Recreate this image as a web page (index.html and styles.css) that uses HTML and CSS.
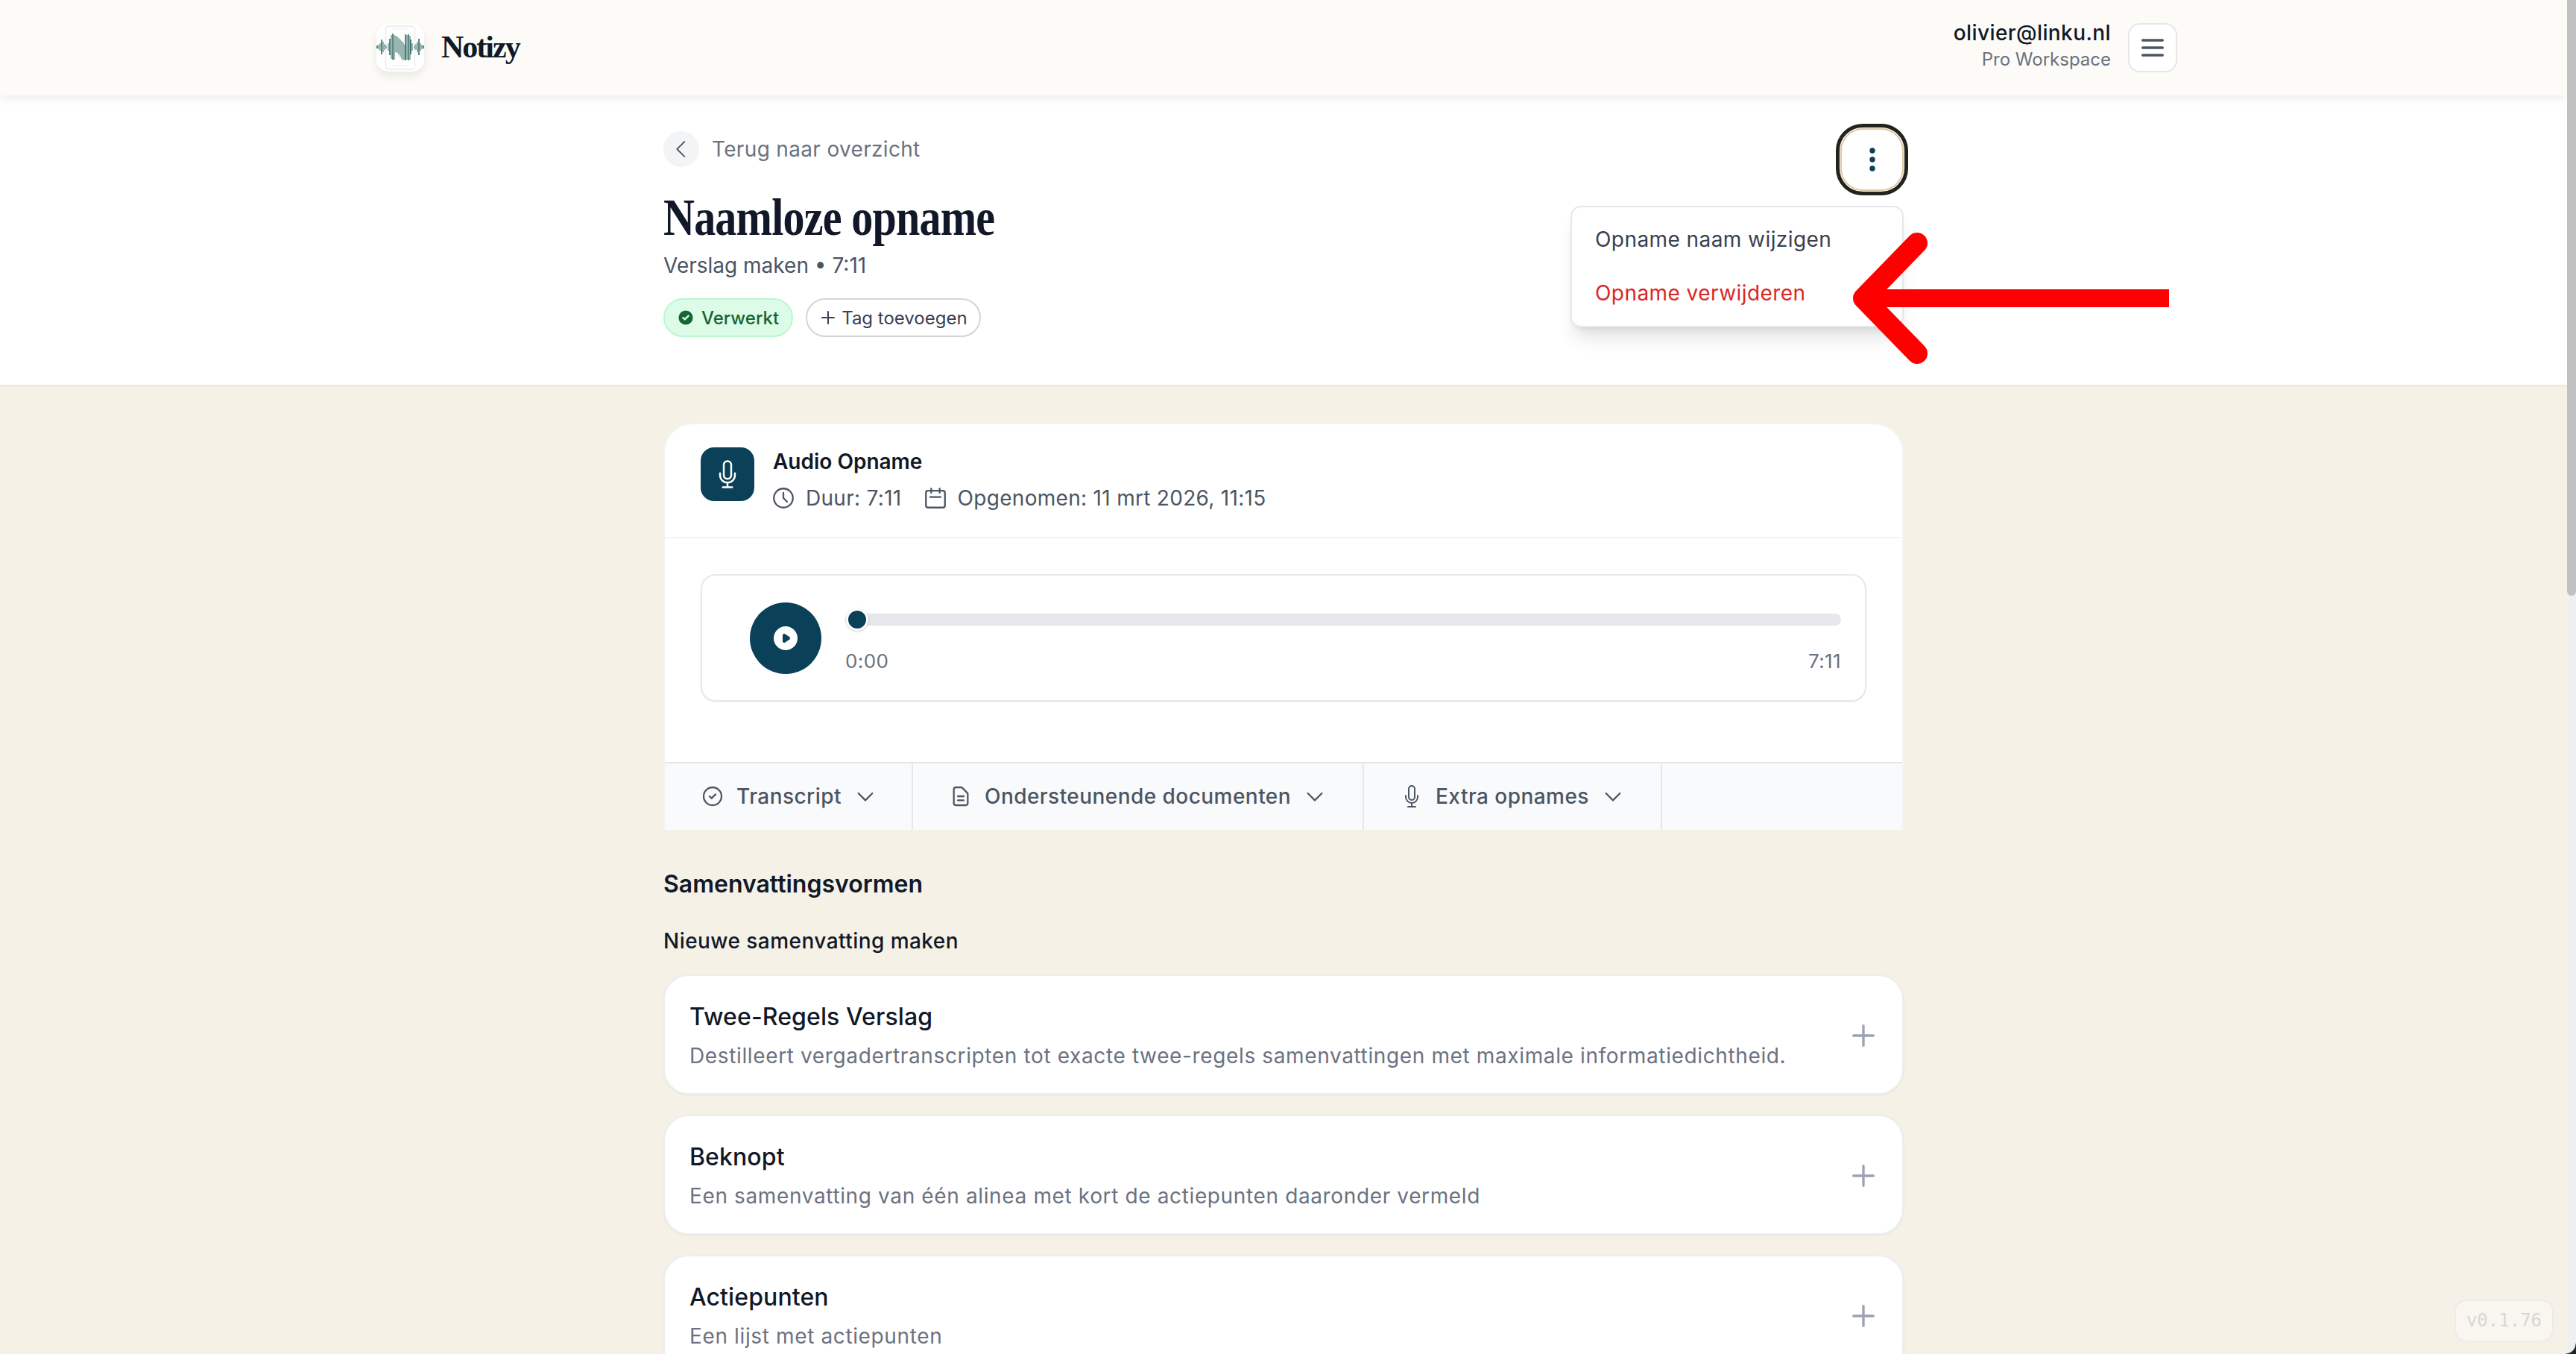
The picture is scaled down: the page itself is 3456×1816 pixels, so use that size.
FILE: index.html
```html
<!DOCTYPE html>
<html lang="nl">
<head>
  <meta charset="UTF-8">
  <meta name="viewport" content="width=device-width, initial-scale=1.0">
  <title>Notizy - Naamloze opname</title>
  <link rel="stylesheet" href="styles.css">
</head>
<body>

<div class="page">
  <header class="topbar">
    <div class="brand">
      <div class="brand-logo">
        <svg viewBox="0 0 64 64" width="64" height="64">
          <rect x="12.5" y="3" width="39" height="58" rx="4" fill="#fff" stroke="#e8eaed" stroke-width="1.4"/>
          <path d="M21 7h22M21 56h22" stroke="#eceef0" stroke-width="1.2"/>
          <path d="M3 28v6M5 26v10M9 24v14M11 27v8M13 29v4M16 26v10M20 15v32M24 15v33M26 16v22M28 17v22M30 19v22M32 21v23M34 23v24M36 25v24M38 28v20M41 15v33M45 16v32M48 26v10M51 29v4M53 27v8M55 24v14M59 26v10M61 28v6" stroke="#5f8f85" stroke-width="1.3" fill="none"/>
          <path d="M1 29v4M7 21v20M18 20v22M22 13v35M39 14v35M43 14v35M46 21v20M57 20v22M63 29v4" stroke="#0d4645" stroke-width="1.3" fill="none"/>
        </svg>
      </div>
      <span class="brand-name">Notizy</span>
    </div>
    <div class="account">
      <div class="account-info">
        <div class="account-mail">olivier@linku.nl</div>
        <div class="account-plan">Pro Workspace</div>
      </div>
      <button class="menu-button">
        <svg viewBox="0 0 24 24" width="40" height="40" fill="none" stroke="#4b5563" stroke-width="2" stroke-linecap="round"><path d="M4 6h16M4 12h16M4 18h16"/></svg>
      </button>
    </div>
  </header>

  <section class="detail">
    <div class="detail-inner">
      <div class="detail-text">
        <div class="back-link">
          <span class="back-circle">
            <svg viewBox="0 0 24 24" width="34" height="34" fill="none" stroke="#4b5563" stroke-width="1.3" stroke-linecap="round" stroke-linejoin="round"><path d="M15 19l-7-7 7-7"/></svg>
          </span>
          Terug naar overzicht
        </div>
        <h1>Naamloze opname</h1>
        <p class="detail-sub">Verslag maken • 7:11</p>
        <div class="pills">
          <span class="pill pill-done">
            <svg viewBox="0 0 20 20" width="24" height="24" fill="#166534"><path fill-rule="evenodd" clip-rule="evenodd" d="M10 18a8 8 0 100-16 8 8 0 000 16zm3.707-9.293a1 1 0 00-1.414-1.414L9 10.586 7.707 9.293a1 1 0 00-1.414 1.414l2 2a1 1 0 001.414 0l4-4z"/></svg>
            Verwerkt
          </span>
          <span class="pill pill-add">
            <svg viewBox="0 0 24 24" width="24" height="24" fill="none" stroke="#374151" stroke-width="2" stroke-linecap="round"><path d="M12 4v16m8-8H4"/></svg>
            Tag toevoegen
          </span>
        </div>
      </div>
      <button class="kebab">
        <svg viewBox="0 0 8 32" width="8" height="32" fill="#0a4158"><circle cx="4" cy="4" r="3.7"/><circle cx="4" cy="16" r="3.7"/><circle cx="4" cy="28" r="3.7"/></svg>
      </button>
      <div class="dropdown">
        <div class="dropdown-item">Opname naam wijzigen</div>
        <div class="dropdown-item danger">Opname verwijderen</div>
      </div>
    </div>
  </section>

  <main class="content">
    <div class="audio-card">
      <div class="audio-head">
        <div class="audio-tile">
          <svg viewBox="0 0 24 24" width="40" height="40" fill="none" stroke="#fff" stroke-width="1.5" stroke-linecap="round" stroke-linejoin="round"><path d="M12 18.75a6 6 0 0 0 6-6v-1.5m-6 7.5a6 6 0 0 1-6-6v-1.5m6 7.5v3.75m-3.75 0h7.5M12 15.75a3 3 0 0 1-3-3V4.5a3 3 0 1 1 6 0v8.25a3 3 0 0 1-3 3Z"/></svg>
        </div>
        <div>
          <div class="audio-title">Audio Opname</div>
          <div class="audio-meta">
            <span class="meta-item">
              <svg viewBox="0 0 24 24" width="34" height="34" fill="none" stroke="#4b5563" stroke-width="1.6" stroke-linecap="round" stroke-linejoin="round"><path d="M12 7v5l3.5 3.5M21 12a9 9 0 11-18 0 9 9 0 0118 0z"/></svg>
              Duur: 7:11
            </span>
            <span class="meta-item">
              <svg viewBox="0 0 24 24" width="34" height="34" fill="none" stroke="#4b5563" stroke-width="1.6" stroke-linecap="round" stroke-linejoin="round"><path d="M8 7V3m8 4V3m-9 8h10M5 21h14a2 2 0 002-2V7a2 2 0 00-2-2H5a2 2 0 00-2 2v12a2 2 0 002 2z"/></svg>
              Opgenomen: 11 mrt 2026, 11:15
            </span>
          </div>
        </div>
      </div>

      <div class="player-wrap">
        <div class="player">
          <div class="play-button">
            <svg viewBox="0 0 20 20" width="40" height="40" fill="#fff"><path fill-rule="evenodd" clip-rule="evenodd" d="M10 18a8 8 0 100-16 8 8 0 000 16zM9.555 7.168A1 1 0 008 8v4a1 1 0 001.555.832l3-2a1 1 0 000-1.664l-3-2z"/></svg>
          </div>
          <div class="timeline">
            <div class="track"><span class="thumb"></span></div>
            <div class="times"><span>0:00</span><span>7:11</span></div>
          </div>
        </div>
      </div>

      <div class="tabs">
        <div class="tab tab-first">
          <svg viewBox="0 0 24 24" width="32" height="32" fill="none" stroke="#4b5563" stroke-width="1.7" stroke-linecap="round" stroke-linejoin="round"><path d="M9 12l2 2 4-4m6 2a9 9 0 11-18 0 9 9 0 0118 0z"/></svg>
          Transcript
          <svg viewBox="0 0 24 24" width="32" height="32" fill="none" stroke="#4b5563" stroke-width="1.7" stroke-linecap="round" stroke-linejoin="round"><path d="M19 9l-7 7-7-7"/></svg>
        </div>
        <div class="tab">
          <svg viewBox="0 0 24 24" width="32" height="32" fill="none" stroke="#4b5563" stroke-width="1.7" stroke-linecap="round" stroke-linejoin="round"><path d="M9 12h6m-6 4h6m2 5H7a2 2 0 01-2-2V5a2 2 0 012-2h5.586a1 1 0 01.707.293l5.414 5.414a1 1 0 01.293.707V19a2 2 0 01-2 2z"/></svg>
          Ondersteunende documenten
          <svg viewBox="0 0 24 24" width="32" height="32" fill="none" stroke="#4b5563" stroke-width="1.7" stroke-linecap="round" stroke-linejoin="round"><path d="M19 9l-7 7-7-7"/></svg>
        </div>
        <div class="tab">
          <svg viewBox="0 0 24 24" width="32" height="32" fill="none" stroke="#4b5563" stroke-width="1.5" stroke-linecap="round" stroke-linejoin="round"><path d="M12 18.75a6 6 0 0 0 6-6v-1.5m-6 7.5a6 6 0 0 1-6-6v-1.5m6 7.5v3.75m-3.75 0h7.5M12 15.75a3 3 0 0 1-3-3V4.5a3 3 0 1 1 6 0v8.25a3 3 0 0 1-3 3Z"/></svg>
          Extra opnames
          <svg viewBox="0 0 24 24" width="32" height="32" fill="none" stroke="#4b5563" stroke-width="1.7" stroke-linecap="round" stroke-linejoin="round"><path d="M19 9l-7 7-7-7"/></svg>
        </div>
      </div>
    </div>

    <h2>Samenvattingsvormen</h2>
    <h3>Nieuwe samenvatting maken</h3>

    <div class="summary-list">
      <div class="summary-card">
        <div>
          <div class="summary-title">Twee-Regels Verslag</div>
          <div class="summary-desc">Destilleert vergadertranscripten tot exacte twee-regels samenvattingen met maximale informatiedichtheid.</div>
        </div>
        <svg viewBox="0 0 24 24" width="40" height="40" fill="none" stroke="#9ca3af" stroke-width="2" stroke-linecap="round"><path d="M12 4v16m8-8H4"/></svg>
      </div>
      <div class="summary-card">
        <div>
          <div class="summary-title">Beknopt</div>
          <div class="summary-desc">Een samenvatting van één alinea met kort de actiepunten daaronder vermeld</div>
        </div>
        <svg viewBox="0 0 24 24" width="40" height="40" fill="none" stroke="#9ca3af" stroke-width="2" stroke-linecap="round"><path d="M12 4v16m8-8H4"/></svg>
      </div>
      <div class="summary-card">
        <div>
          <div class="summary-title">Actiepunten</div>
          <div class="summary-desc">Een lijst met actiepunten</div>
        </div>
        <svg viewBox="0 0 24 24" width="40" height="40" fill="none" stroke="#9ca3af" stroke-width="2" stroke-linecap="round"><path d="M12 4v16m8-8H4"/></svg>
      </div>
    </div>
  </main>

  <!-- red annotation arrow on top of the screenshot -->
  <svg class="arrow" viewBox="0 0 440 190" width="440" height="190" fill="none" stroke="#ff0000">
    <path d="M30 95H440" stroke-width="24"/>
    <path d="M102 21L30 95L102 169" stroke-width="28" stroke-linecap="round" stroke-linejoin="round"/>
  </svg>

  <div class="version">v0.1.76</div>
</div>

<div class="scrollbar"><div class="scrollbar-thumb"></div></div>
<div class="window-corner"></div>

</body>
</html>
```

FILE: styles.css
```css
/* General Styles */
html, body {
  height: 100%;
  overflow: hidden;
}
body {
  margin: 0;
  display: flex;
  font-family: Inter, "Noto Sans", sans-serif;
  color: #111827;
  background: #f5f1e7;
}
button {
  padding: 0;
  font: inherit;
  cursor: pointer;
}
svg {
  display: block;
  flex: none;
}
.page {
  position: relative;
  flex: 1;
  min-width: 0;
  height: 1816px;
  overflow: hidden;
}

/* Top bar */
.topbar {
  position: relative;
  z-index: 2;
  display: flex;
  justify-content: space-between;
  align-items: center;
  height: 128px;
  padding: 0 523px 0 505px;
  background: #fcfbf7;
  box-shadow: 0 4px 12px rgba(0, 0, 0, 0.07);
}
.brand {
  display: flex;
  align-items: center;
  gap: 23px;
}
.brand-logo {
  width: 64px;
  height: 64px;
  background: #fff;
  border-radius: 16px;
  box-shadow: 0 6px 12px rgba(0, 0, 0, 0.08);
}
.brand-name {
  margin-top: -2px;
  font-family: "Liberation Serif", serif;
  font-size: 42px;
  font-weight: 700;
  letter-spacing: -2px;
  color: #111827;
}
.account {
  display: flex;
  align-items: center;
  gap: 23px;
}
.account-info {
  margin-top: -6px;
  text-align: right;
}
.account-mail {
  font-size: 28px;
  font-weight: 500;
  line-height: 36px;
  letter-spacing: 0.4px;
  color: #111827;
}
.account-plan {
  margin-top: 2px;
  font-size: 24px;
  line-height: 32px;
  color: #6b7280;
}
.menu-button {
  display: flex;
  align-items: center;
  justify-content: center;
  width: 66px;
  height: 66px;
  background: #fff;
  border: 2px solid #e5e7eb;
  border-radius: 16px;
}

/* Recording header */
.detail {
  background: #fff;
  box-shadow: 0 1px 3px rgba(0, 0, 0, 0.08);
}
.detail-inner {
  position: relative;
  display: flex;
  justify-content: space-between;
  align-items: flex-start;
  width: 1664px;
  margin: 0 auto;
  padding: 48px 0 64px;
}
.back-link {
  display: flex;
  align-items: center;
  gap: 17px;
  font-size: 28px;
  letter-spacing: 0.33px;
  color: #6b7280;
}
.back-circle {
  display: flex;
  align-items: center;
  justify-content: center;
  width: 48px;
  height: 48px;
  background: #f3f4f6;
  border-radius: 50%;
}
h1 {
  margin: 32px 0 0;
  font-family: "Liberation Serif", serif;
  font-size: 70px;
  font-weight: 700;
  line-height: 72px;
  letter-spacing: -1px;
  white-space: nowrap;
  color: #111827;
  transform: scaleX(0.83);
  transform-origin: left center;
}
.detail-sub {
  margin: 8px 0 0;
  font-size: 28px;
  line-height: 40px;
  color: #4b5563;
}
.pills {
  display: flex;
  gap: 17px;
  margin-top: 24px;
}
.pill {
  display: flex;
  align-items: center;
  box-sizing: border-box;
  height: 52px;
  border-radius: 26px;
  font-size: 24px;
}
.pill-done {
  gap: 9px;
  padding: 0 17px 0 16px;
  background: #dcfce7;
  border: 2px solid #bbf7d0;
  color: #166534;
  font-weight: 500;
}
.pill-add {
  gap: 6px;
  padding: 0 16px;
  background: #fff;
  border: 2px solid #d1d5db;
  color: #374151;
}
.kebab {
  display: flex;
  align-items: center;
  justify-content: center;
  width: 85px;
  height: 84px;
  margin-top: -4px;
  background: #fff;
  border: 2px solid #dccaa4;
  border-radius: 30px;
  outline: 5px solid #23231c;
  outline-offset: 1px;
}
.dropdown {
  position: absolute;
  top: 148px;
  right: 0;
  box-sizing: border-box;
  width: 447px;
  height: 163px;
  padding: 7px 0;
  background: #fff;
  border: 2px solid #e5e7eb;
  border-radius: 14px;
  box-shadow: 0 20px 25px -5px rgba(0, 0, 0, 0.1), 0 8px 10px -6px rgba(0, 0, 0, 0.1);
  z-index: 3;
}
.dropdown-item {
  height: 72px;
  padding-left: 31px;
  font-size: 28px;
  line-height: 72px;
  letter-spacing: 0.43px;
  color: #374151;
}
.dropdown-item.danger {
  color: #dc2626;
}

/* Audio card */
.content {
  width: 1664px;
  margin: 0 auto;
  padding-top: 51px;
}
.audio-card {
  box-sizing: border-box;
  height: 546px;
  background: #fff;
  border: 2px solid #f3f4f6;
  border-bottom: none;
  border-radius: 40px 40px 0 0;
}
.audio-head {
  display: flex;
  gap: 25px;
  height: 153px;
  box-sizing: border-box;
  padding: 31px 48px 0;
  border-bottom: 2px solid #f3f4f6;
}
.audio-tile {
  display: flex;
  align-items: center;
  justify-content: center;
  width: 72px;
  height: 72px;
  background: #0a4158;
  border-radius: 18px;
}
.audio-title {
  font-size: 28px;
  font-weight: 600;
  line-height: 40px;
  margin-top: -1px;
}
.audio-meta {
  display: flex;
  gap: 28px;
  margin-top: 9px;
  margin-left: -3px;
  font-size: 28px;
  line-height: 40px;
  letter-spacing: 0.3px;
  color: #4b5563;
}
.meta-item {
  display: flex;
  align-items: center;
  gap: 13px;
}
.player-wrap {
  height: 300px;
  box-sizing: border-box;
  padding: 48px 48px 0;
}
.player {
  display: flex;
  box-sizing: border-box;
  height: 171px;
  padding: 36px 32px 0 64px;
  border: 2px solid #e5e7eb;
  border-radius: 20px;
  box-shadow: 0 1px 2px rgba(0, 0, 0, 0.05);
}
.play-button {
  display: flex;
  align-items: center;
  justify-content: center;
  width: 96px;
  height: 96px;
  background: #0a4158;
  border-radius: 50%;
}
.timeline {
  flex: 1;
  margin-left: 32px;
}
.track {
  position: relative;
  height: 16px;
  margin-top: 15px;
  background: #e5e7eb;
  border-radius: 8px;
}
.thumb {
  position: absolute;
  top: -7px;
  left: 1px;
  width: 24px;
  height: 24px;
  background: #0a4158;
  border: 3px solid #fff;
  border-radius: 50%;
  box-shadow: 0 1px 3px rgba(0, 0, 0, 0.2);
}
.times {
  display: flex;
  justify-content: space-between;
  margin-top: 30px;
  font-size: 26px;
  line-height: 36px;
  letter-spacing: 0.4px;
  color: #6b7280;
}
.tabs {
  display: flex;
  height: 91px;
  box-sizing: border-box;
  background: #f9fafb;
  border-top: 2px solid #e5e7eb;
}
.tab {
  display: flex;
  align-items: center;
  gap: 16px;
  padding: 0 48px 2px 48px;
  border-right: 2px solid #e5e7eb;
  font-size: 28px;
  font-weight: 500;
  letter-spacing: 0.45px;
  color: #4b5563;
}
.tab-first {
  padding-right: 46px;
}

/* Summary forms */
h2 {
  margin: 55px 0 0;
  font-size: 32px;
  font-weight: 600;
  line-height: 36px;
  color: #111827;
}
h3 {
  margin: 38px 0 0;
  font-size: 28px;
  font-weight: 500;
  line-height: 40px;
  letter-spacing: 0.45px;
  color: #111827;
}
.summary-list {
  display: flex;
  flex-direction: column;
  gap: 27px;
  margin-top: 25px;
}
.summary-card {
  display: flex;
  align-items: center;
  justify-content: space-between;
  box-sizing: border-box;
  height: 161px;
  padding: 2px 32px 0 33px;
  background: #fff;
  border: 2px solid #eceef0;
  border-radius: 34px;
  box-shadow: 0 1px 3px rgba(0, 0, 0, 0.06);
}
.summary-title {
  font-size: 32px;
  font-weight: 500;
  line-height: 44px;
  letter-spacing: 0.1px;
  color: #111827;
}
.summary-desc {
  margin-top: 10px;
  font-size: 28px;
  line-height: 40px;
  letter-spacing: 0.63px;
  color: #6b7280;
}

/* Overlays */
.arrow {
  position: absolute;
  top: 305px;
  left: 2470px;
  z-index: 4;
}
.version {
  position: absolute;
  top: 1743px;
  right: 18px;
  box-sizing: border-box;
  width: 133px;
  height: 57px;
  background: rgba(255, 255, 255, 0.4);
  border: 2px solid #ebebe9;
  border-radius: 16px;
  font-family: "DejaVu Sans Mono", monospace;
  font-size: 24px;
  line-height: 53px;
  text-align: center;
  color: #d6d6d6;
}
.scrollbar {
  flex: none;
  width: 12px;
  height: 1816px;
  background: #efefef;
}
.scrollbar-thumb {
  height: 799px;
  background: #c1c1c1;
  border-radius: 0 0 6px 6px;
}
.window-corner {
  position: absolute;
  right: 0;
  bottom: 0;
  width: 14px;
  height: 14px;
  background: radial-gradient(circle at 0 0, transparent 13px, #1d2a22 14px);
}
```
